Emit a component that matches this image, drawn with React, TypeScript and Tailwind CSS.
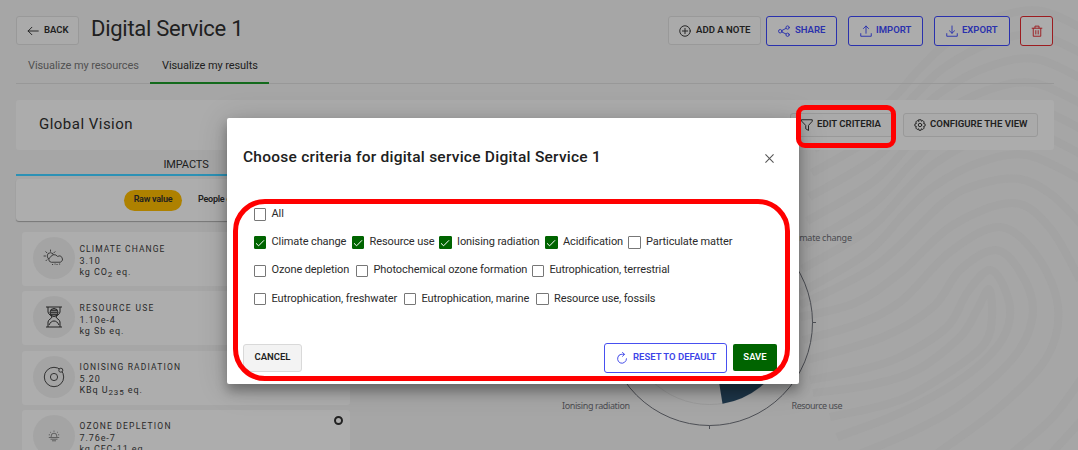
import React from "react";

type IconProps = { className?: string; children: React.ReactNode };

function Icon({ className = "size-3", children }: IconProps) {
  return (
    <svg viewBox="0 0 16 16" fill="none" stroke="currentColor" strokeWidth="1.25" strokeLinecap="round" strokeLinejoin="round" className={`mt-[1px] shrink-0 ${className}`}>
      {children}
    </svg>
  );
}

const ArrowLeft = () => <Icon><path d="M15 8H1.500M6.500 3l-5 5 5 5" /></Icon>;
const PlusCircle = () => <Icon><circle cx="8" cy="8" r="7" /><path d="M8 4.500v7M4.500 8h7" /></Icon>;
const Share = () => (
  <Icon>
    <circle cx="3" cy="8.300" r="2.300" /><circle cx="12.800" cy="3.400" r="2.200" /><circle cx="12.800" cy="13" r="2.200" />
    <path d="m5.300 7.300 5.400-2.800M5.300 9.400l5.400 2.600" />
  </Icon>
);
const Upload = () => <Icon><path d="M8 11V1.500M4.600 4.700 8 1.300l3.400 3.400M1 11.500V15h14v-3.500" /></Icon>;
const Download = () => <Icon><path d="M8 1.300v9.600M4.600 7.700 8 11l3.400-3.300M1 11.500V15h14v-3.500" /></Icon>;
const Trash = () => (
  <Icon><path d="M1.500 4.300h13M5.300 4V1.500h5.400V4M3 4.500V15h10V4.500M6.400 7.500v4.500M9.600 7.500v4.500" /></Icon>
);
const Funnel = () => (
  <Icon><path d="M1 1h14v2L10 8.600V15.300L6.300 13V8.600L1 3z" /></Icon>
);
const Gear = () => (
  <Icon>
    <path d="M6.600 1h2.800l.5 2 1.800-1 2 2-1 1.900 2.100.7v2.800l-2.100.7 1 1.900-2 2-1.800-1-.5 2H6.600l-.5-2-1.800 1-2-2 1-1.900-2.100-.7V6.600l2.100-.7-1-1.900 2-2 1.800 1z" />
    <circle cx="8" cy="8" r="2.300" />
  </Icon>
);
const Refresh = () => (
  <Icon><path d="M4 4.500A6 6 0 1 0 14 9M4 4.500C5.500 3 7.500 2.700 11 3.200M8.700.5l2.600 2.700-2.600 2.500" /></Icon>
);

const WeatherIcon = () => (
  <svg viewBox="0 0 22 18" className="h-[18px] w-[22px]" fill="none" stroke="#333" strokeWidth="0.9" strokeLinecap="round">
    <circle cx="7.500" cy="7" r="3.300" />
    <path d="M7.500 1v1.300M2.800 2.700l1 1M12 2.700l-1 1M1 7h1.500M3 11.700l.9-.9" />
    <path d="M8 13.200a2.600 2.600 0 0 1-.5-5 4 4 0 0 1 7-.8 3.100 3.100 0 0 1 3.500 5.600z" fill="#a4a4a4" />
    <path d="M9.500 15.500h.1M12 15h.1M14 15.500h.1M16.500 15h.1" strokeWidth="1.200" />
  </svg>
);
const HourglassIcon = () => (
  <svg viewBox="0 0 18 22" className="h-[22px] w-[18px]" fill="none" stroke="#222" strokeWidth="1">
    <path d="M1 1h16M1 21h16M3 1v5c0 2.500 4 3.500 4 5s-4 2.500-4 5v5M15 1v5c0 2.500-4 3.500-4 5s4 2.500 4 5v5M4 19c1.500-3 3-4 5-4s3.500 1 5 4" />
    <circle cx="9" cy="6.500" r="4" />
    <path d="M5 6.500h8M9 2.500v8M7 3v7M11 3v7M6 4.500h6M6 8.500h6" strokeWidth="0.700" />
  </svg>
);
const AtomIcon = () => (
  <svg viewBox="0 0 22 22" className="size-[22px]" fill="none" stroke="#333" strokeWidth="1">
    <circle cx="11" cy="11" r="9.700" /><circle cx="11" cy="11" r="3.600" /><circle cx="17.800" cy="4.200" r="2" fill="#a4a4a4" />
  </svg>
);
const SunIcon = () => (
  <svg viewBox="0 0 12 12" className="size-3" fill="none" stroke="#444" strokeWidth="0.700">
    <path d="M.8 7.500h10.400M2.500 9.200h7M4 10.800h4M3.200 7V6a2.800 2.800 0 0 1 5.600 0v1M6 .6v1.200M2.200 2l.9.900M9.800 2l-.9.900M.8 4.800H2M10 4.800h1.200" />
  </svg>
);

type Point = [number, number];

const outerRidge: Point[] = [[800, 293], [867, 253], [905, 213], [933, 187], [978, 163], [1027, 155], [1082, 180]];

const ridges: Point[][] = [
  [[813, 393], [870, 385], [917, 370], [960, 337], [977, 310], [989, 289], [992, 317], [985, 343], [957, 367], [900, 400], [830, 417]],
  [[810, 380], [860, 370], [900, 357], [947, 327], [967, 293], [989, 270], [1004, 287], [1010, 317], [997, 347], [960, 380], [900, 413], [837, 437]],
  [[807, 360], [883, 337], [933, 307], [960, 270], [995, 250], [1019, 270], [1033, 310], [1017, 353], [967, 400], [920, 428], [860, 454]],
  [[803, 340], [855, 325], [900, 302], [950, 252], [1000, 227], [1037, 256], [1058, 307], [1047, 357], [1000, 407], [935, 455]],
  [[800, 317], [855, 303], [900, 273], [953, 225], [1013, 203], [1050, 228], [1080, 280]],
  [[800, 305], [877, 265], [943, 203], [980, 184], [1020, 179], [1052, 195], [1082, 225]],
  [[1082, 378], [1052, 418], [1010, 455]],
  [[1082, 420], [1050, 455]],
  ...[0, 24, 48, 72, 96, 120, 144].map((lift) => outerRidge.map(([x, y]): Point => [x + lift * 0.1, y - lift])),
];

function smooth(points: Point[]) {
  let d = `M${points[0][0]} ${points[0][1]}`;
  for (let i = 0; i < points.length - 1; i++) {
    const a = points[Math.max(i - 1, 0)];
    const b = points[i];
    const c = points[i + 1];
    const e = points[Math.min(i + 2, points.length - 1)];
    d += `C${b[0] + (c[0] - a[0]) / 6} ${b[1] + (c[1] - a[1]) / 6} ${c[0] - (e[0] - b[0]) / 6} ${c[1] - (e[1] - b[1]) / 6} ${c[0]} ${c[1]}`;
  }
  return d;
}

function Fingerprint() {
  return (
    <svg viewBox="0 0 1078 450" className="absolute inset-0 h-[450px] w-[1078px]" fill="none" stroke="#a3a3a3" strokeWidth="8">
      {ridges.map((points, i) => <path key={i} d={smooth(points)} />)}
    </svg>
  );
}

function Chart() {
  return (
    <svg viewBox="0 0 1078 450" className="absolute inset-0 h-[450px] w-[1078px]" fill="none">
      <circle cx="709.500" cy="322.500" r="82" stroke="#989898" strokeWidth="0.800" />
      <path d="M709.500 322.500 722.500 403.800A82 82 0 0 0 785 354z" fill="#1d3548" />
      <circle cx="709.500" cy="322.500" r="103" stroke="#4d4f55" strokeWidth="1" />
      <path d="M709.500 425.500v3.500M812.500 322.500h3.500" stroke="#4d4f55" />
      <g fill="#4b4c51" fontSize="9" fontFamily="Noto Sans, sans-serif">
        <text x="562" y="409" textLength="68">Ionising radiation</text>
        <text x="791.500" y="409" textLength="51">Resource use</text>
        <text x="789.500" y="241" textLength="62.500">Climate change</text>
      </g>
    </svg>
  );
}

function Criterion({ label, width, checked = false }: { label: string; width: string; checked?: boolean }) {
  return (
    <label className={`flex h-[14px] shrink-0 items-start whitespace-nowrap ${width}`}>
      <span className={`mt-[2px] mr-[5.500px] -ml-[0.500px] flex size-[12.500px] shrink-0 items-center justify-center rounded-[1px] border ${checked ? "border-[#006400] bg-[#006400] text-white" : "border-[#777] bg-white"}`}>
        {checked && (
          <svg viewBox="0 0 10 10" className="size-[10px]" fill="none" stroke="currentColor" strokeWidth="1"><path d="m1 5.300 2.600 2.500L9 2.300" /></svg>
        )}
      </span>
      <span className="mt-[0.700px] text-[11px] leading-[14px] tracking-[-0.100px] text-[#2b2b2b]">{label}</span>
    </label>
  );
}

type ImpactProps = { icon: React.ReactNode; name: string; spacing: string; value: string; unit: React.ReactNode };

function Impact({ icon, name, spacing, value, unit }: ImpactProps) {
  return (
    <div className="flex h-[54px] shrink-0 rounded-[3px] bg-[#adadad] pl-[11px]">
      <div className="mt-[5px] flex size-[42px] items-center justify-center rounded-full bg-[#a4a4a4]">{icon}</div>
      <div className="ml-[4.500px] pt-[11.500px] text-[9px] leading-[11px] whitespace-nowrap text-[#292929]">
        <div className={`mb-[1px] text-[8.500px] ${spacing}`}>{name}</div>
        <div className="tracking-[0.900px]">{value}</div>
        <div className="tracking-[0.900px]">{unit}</div>
      </div>
    </div>
  );
}

const grayButton = "flex items-center rounded-[3px] border border-[#999] bg-[#aaaaaa] pb-[1px] whitespace-nowrap text-[#202020]";
const blueButton = "flex items-center rounded-[3px] border-[1.500px] border-[#2a31ad] bg-[#acacac] pb-[1.500px] pl-[11px] text-[#2a31ad]";

export default function App() {
  return (
    <main className="relative h-[450px] w-[1078px] overflow-hidden bg-[#a6a6a6] font-['Roboto',sans-serif] text-[#202020]">
      <Fingerprint />
      <div className="relative flex h-[450px] flex-col pl-4">
        <header className="flex h-[45px] pt-4 text-[9.500px] font-semibold">
          <button className={`${grayButton} h-[29px] w-[63px] gap-[5px] pl-[10px]`}><ArrowLeft />BACK</button>
          <h1 className="ml-3 w-[577px] text-[22px] leading-[25px] font-normal tracking-[-0.270px]">Digital Service 1</h1>
          <button className={`${grayButton} h-[29px] w-[93px] gap-[5px] pl-[10px] text-[9.600px]`}><PlusCircle />ADD A NOTE</button>
          <button className={`${blueButton} ml-[5px] h-[30px] w-[71px] gap-[5px]`}><Share />SHARE</button>
          <button className={`${blueButton} ml-[11px] h-[30px] w-[75px] gap-[4px]`}><Upload />IMPORT</button>
          <button className={`${blueButton} ml-[11px] h-[30px] w-[76px] gap-[4px]`}><Download />EXPORT</button>
          <button className="ml-[10px] flex h-[30px] w-[33px] items-center justify-center rounded-[3px] border-[1.500px] border-[#9c1c20] bg-[#acacac] pb-[1.500px] text-[#9c1c20]"><Trash /></button>
        </header>
        <nav className="flex h-[39px] w-[1038px] border-b border-[#989898] text-[11px] tracking-[-0.080px]">
          <div className="w-[134px] pt-[13px] pl-3 text-[#515151]">Visualize my resources</div>
          <div className="h-[39px] w-[119px] border-b-2 border-[#136a1c] pt-[13px] pl-3">Visualize my results</div>
        </nav>
        <section className="mt-4 flex h-[50px] w-[1038px] shrink-0 rounded-[3px] bg-[#adadad]/90 pt-[13px] pl-[23px]">
          <h2 className="-mt-[1.500px] w-[751px] text-[15px] leading-6 tracking-[0.480px]">Global Vision</h2>
          <button className={`${grayButton} h-6 w-[103px] gap-1 pl-[10px] text-[9.600px] font-semibold`}><Funnel />EDIT CRITERIA</button>
          <button className={`${grayButton} ml-[10px] h-6 w-[135px] gap-[4px] pl-[10px] text-[9.600px] font-semibold`}><Gear />CONFIGURE THE VIEW</button>
        </section>
        <aside className="w-[340px]">
          <div className="h-[26px] border-b-2 border-[#2c91b5] pt-[7px] text-center text-[11px] leading-[15px] tracking-[-0.100px]">IMPACTS</div>
          <div className="mt-[3px] flex h-[42px] items-center rounded-[3px] bg-[#adadad] pl-[108px] text-[9px] font-semibold tracking-[-0.250px] shadow-[0_1px_1px_#777]">
            <span className="flex h-[21px] w-[58px] items-center justify-center rounded-full bg-[#ae8100]">Raw value</span>
            <span className="ml-4 whitespace-nowrap">People equivalent</span>
          </div>
          <div className="relative mt-[11px] ml-[6px] flex w-[328px] flex-col gap-[5.300px]">
            <Impact icon={<WeatherIcon />} name="CLIMATE CHANGE" spacing="tracking-[1.080px]" value="3.10" unit={<>kg CO<sub className="text-[8px]">2</sub> eq.</>} />
            <Impact icon={<HourglassIcon />} name="RESOURCE USE" spacing="tracking-[1.300px]" value="1.10e-4" unit="kg Sb eq." />
            <Impact icon={<AtomIcon />} name="IONISING RADIATION" spacing="tracking-[1.150px]" value="5.20" unit={<>KBq U<sub className="text-[8px]">235</sub> eq.</>} />
            <Impact icon={<SunIcon />} name="OZONE DEPLETION" spacing="tracking-[1.200px]" value="7.76e-7" unit="kg CFC-11 eq." />
            <span className="absolute top-[184px] right-[7px] size-[9px] rounded-full border-2 border-[#222]" />
          </div>
        </aside>
      </div>
      <Chart />

      <div role="dialog" className="absolute top-[118px] left-[227px] flex h-[266px] w-[572px] flex-col rounded-[2px] bg-white px-4 shadow-[0_7px_12px_rgba(0,0,0,0.3),0_3px_30px_rgba(0,0,0,0.18)]">
        <div className="flex h-[88px] items-start justify-between pt-[27.500px] pr-[9px]">
          <h2 className="text-[15.500px] leading-[23px] font-medium tracking-[0.240px] text-[#202020]">Choose criteria for digital service Digital Service 1</h2>
          <svg viewBox="0 0 10 10" className="mt-[8px] size-[9px]" fill="none" stroke="#555" strokeWidth="1.200"><path d="m.5.5 9 9m0-9-9 9" /></svg>
        </div>
        <div className="flex flex-col gap-[14.300px] pl-[11px]">
          <div className="flex"><Criterion label="All" width="w-[50px]" /></div>
          <div className="flex">
            <Criterion label="Climate change" width="w-[98px]" checked />
            <Criterion label="Resource use" width="w-[87.500px]" checked />
            <Criterion label="Ionising radiation" width="w-[106px]" checked />
            <Criterion label="Acidification" width="w-[83px]" checked />
            <Criterion label="Particulate matter" width="w-[110px]" />
          </div>
          <div className="flex">
            <Criterion label="Ozone depletion" width="w-[102px]" />
            <Criterion label="Photochemical ozone formation" width="w-[176px]" />
            <Criterion label="Eutrophication, terrestrial" width="w-[150px]" />
          </div>
          <div className="flex">
            <Criterion label="Eutrophication, freshwater" width="w-[150px]" />
            <Criterion label="Eutrophication, marine" width="w-[132.500px]" />
            <Criterion label="Resource use, fossils" width="w-[130px]" />
          </div>
        </div>
        <div className="mt-auto flex h-[41px] items-start text-[9.500px] font-semibold">
          <button className="mt-[1px] h-7 w-[59px] rounded-[3px] border border-[#d9d9d9] bg-[#f3f3f3] pb-[1px] text-[#222]">CANCEL</button>
          <button className="ml-auto flex h-[30px] w-[123px] items-center gap-[5px] rounded-[3px] border-[1.500px] border-[#4850f0] pb-[1.500px] pl-[11px] whitespace-nowrap text-[#3c44e8]"><Refresh />RESET TO DEFAULT</button>
          <button className="mt-[1px] mr-[6px] ml-[6px] h-[27px] w-[44px] rounded-[2px] bg-[#006400] text-white">SAVE</button>
        </div>
      </div>

      <div className="absolute top-[105px] left-[796px] h-[43px] w-[100px] rounded-[9px] border-[5px] border-[#ff0000]" />
      <div className="absolute top-[199px] left-[233px] h-[182px] w-[557px] rounded-[32px] border-[5px] border-[#ff0000]" />
    </main>
  );
}
